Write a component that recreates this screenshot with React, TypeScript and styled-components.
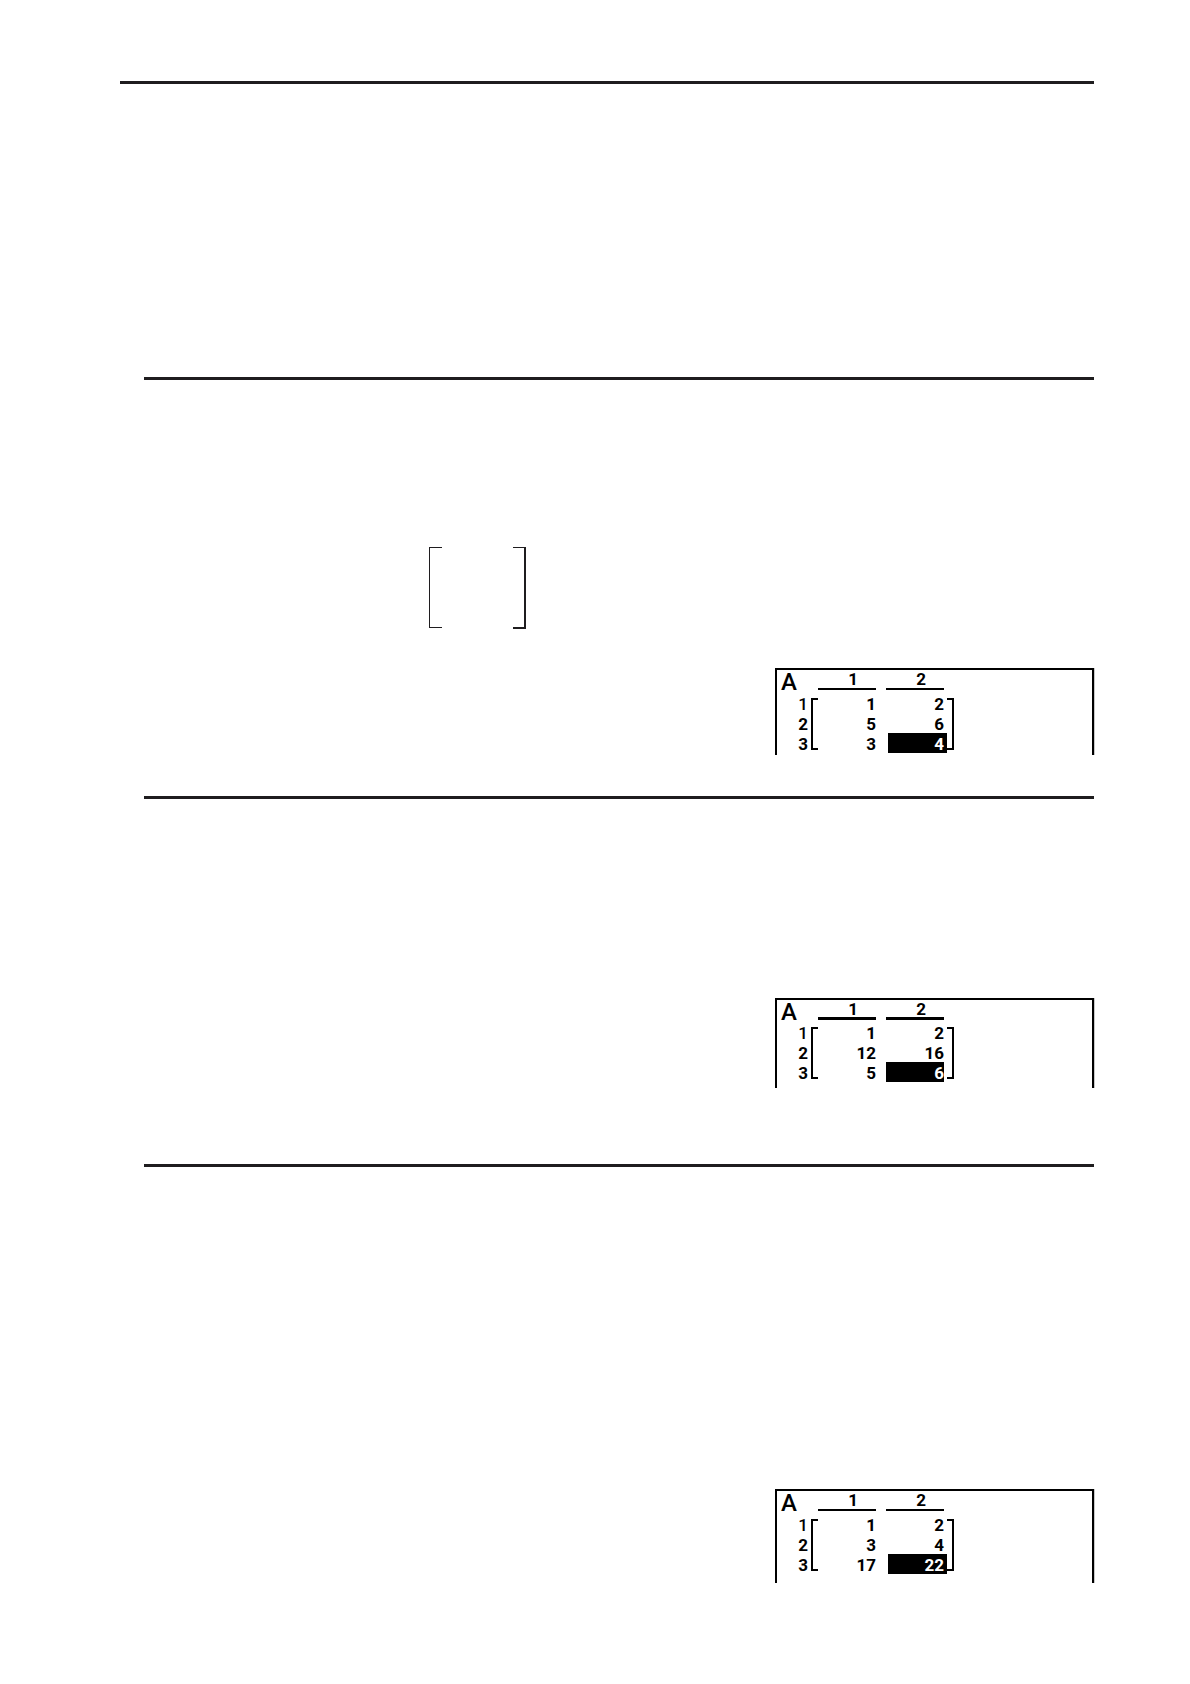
import React from "react";
import styled, { createGlobalStyle } from "styled-components";

const GlobalStyle = createGlobalStyle`
  * { box-sizing: border-box; }
  body { margin: 0; background: #fff; color: #000; font-family: Roboto, "Liberation Sans", sans-serif; }
`;

const Page = styled.main`
  padding: 81px 96px 101px 120px;
`;

const PageHeader = styled.header`
  border-top: 3px solid #1f1d1f;
  padding-bottom: 293px;
`;

const Example = styled.section<{ $before: number; $after: number }>`
  margin-left: 24px;
  border-top: 3px solid #1f1d1f;
  padding-top: ${(p) => p.$before}px;
  padding-bottom: ${(p) => p.$after}px;
`;

const Matrix = styled.div`
  display: flex;
  justify-content: space-between;
  width: 97px;
  height: 82px;
  margin: 0 0 39px 285px;
`;

const MatrixLeft = styled.span`
  width: 13px;
  height: 81px;
  border: 1px solid #1f1d1f;
  border-right: 0;
`;

const MatrixRight = styled.span`
  width: 13px;
  border: solid #1f1d1f;
  border-width: 1px 2px 2px 0;
`;

const Screen = styled.div<{ $height: number }>`
  width: 319px;
  height: ${(p) => p.$height}px;
  margin-left: auto;
  border: 2px solid #000;
  border-bottom: 0;
  box-shadow: 1px 0 0 #c8c8c8;
`;

const Grid = styled.table`
  width: 177px;
  table-layout: fixed;
  border-collapse: collapse;
  font-size: 17px;
  font-weight: 700;
  line-height: 20px;
  text-align: right;

  td, th { padding: 0; vertical-align: top; }
`;

const Col = styled.col<{ $width: number }>`
  width: ${(p) => p.$width}px;
`;

const HeadRow = styled.tr<{ $height: number }>`
  height: ${(p) => p.$height}px;
`;

const Name = styled.th`
  font-size: 24px;
  font-weight: 500;
  text-align: left;
`;

const NameText = styled.span`
  display: block;
  height: 20px;
  padding-left: 4px;
  line-height: 24px;
`;

const ColumnLabel = styled.span<{ $rule: number }>`
  display: block;
  height: 20px;
  margin-left: auto;
  width: 58px;
  padding-right: 18px;
  line-height: 18px;
  border-bottom: ${(p) => p.$rule}px solid #000;
`;

const RowLabel = styled.span<{ $thin: boolean }>`
  display: block;
  height: 20px;
  line-height: 22px;
  text-align: right;
  font-weight: ${(p) => (p.$thin ? 500 : 700)};
`;

const Value = styled.span`
  display: block;
  width: 58px;
  height: 20px;
  margin-left: auto;
  line-height: 22px;
`;

const SelectedValue = styled(Value)<{ $wide: boolean }>`
  width: ${(p) => (p.$wide ? 59 : 58)}px;
  margin-left: ${(p) => (p.$wide ? 12 : 10)}px;
  padding-right: ${(p) => (p.$wide ? 3 : 0)}px;
  background: #000;
  color: #fff;
`;

const Bracket = styled.span<{ $side: "left" | "right" }>`
  display: block;
  width: 7px;
  height: 52px;
  margin: 5px 0 0 3px;
  border: 2px solid #000;
  border-${(p) => (p.$side === "left" ? "right" : "left")}: 0;
`;

type ScreenProps = {
  height: number;
  headHeight: number;
  rule: number;
  wideCursor: boolean;
  rows: number[][];
};

function MatrixScreen({ height, headHeight, rule, wideCursor, rows }: ScreenProps) {
  return (
    <Screen $height={height}>
      <Grid>
        <colgroup>
          <Col $width={31} />
          <Col $width={10} />
          <Col $width={58} />
          <Col $width={68} />
          <Col $width={10} />
        </colgroup>
        <thead>
          <HeadRow $height={headHeight}>
            <Name scope="col"><NameText>A</NameText></Name>
            <td />
            <th scope="col"><ColumnLabel $rule={rule}>1</ColumnLabel></th>
            <th scope="col"><ColumnLabel $rule={rule}>2</ColumnLabel></th>
            <td />
          </HeadRow>
        </thead>
        <tbody>
          {rows.map(([first, second], i) => (
            <tr key={i}>
              <th scope="row"><RowLabel $thin={i === 0}>{i + 1}</RowLabel></th>
              {i === 0 && <td rowSpan={rows.length}><Bracket $side="left" /></td>}
              <td><Value>{first}</Value></td>
              <td>
                {i === rows.length - 1 ? (
                  <SelectedValue $wide={wideCursor}>{second}</SelectedValue>
                ) : (
                  <Value>{second}</Value>
                )}
              </td>
              {i === 0 && <td rowSpan={rows.length}><Bracket $side="right" /></td>}
            </tr>
          ))}
        </tbody>
      </Grid>
    </Screen>
  );
}

export default function App() {
  return (
    <>
      <GlobalStyle />
      <Page>
        <PageHeader />
        <Example $before={167} $after={41}>
          <Matrix>
            <MatrixLeft />
            <MatrixRight />
          </Matrix>
          <MatrixScreen height={87} headHeight={23} rule={2} wideCursor rows={[[1, 2], [5, 6], [3, 4]]} />
        </Example>
        <Example $before={199} $after={76}>
          <MatrixScreen height={90} headHeight={22} rule={3} wideCursor={false} rows={[[1, 2], [12, 16], [5, 6]]} />
        </Example>
        <Example $before={322} $after={0}>
          <MatrixScreen height={94} headHeight={23} rule={2} wideCursor rows={[[1, 2], [3, 4], [17, 22]]} />
        </Example>
      </Page>
    </>
  );
}
